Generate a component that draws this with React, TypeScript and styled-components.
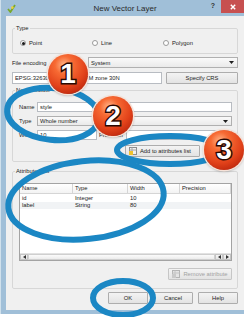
import React from 'react';
import styled, { createGlobalStyle } from 'styled-components';

const FRAME = '#a0bfd8';

const GlobalStyle = createGlobalStyle`
    *, *::before, *::after {
        box-sizing: border-box;
    }

    html, body {
        margin: 0;
        padding: 0;
        background: #fff;
    }
`;

const columns = ['Name', 'Type', 'Width', 'Precision'];

const attributes = [
    ['id', 'Integer', '10', ''],
    ['label', 'String', '80', ''],
];

const badges = [
    { n: '1', x: 68, y: 74 },
    { n: '2', x: 113, y: 116 },
    { n: '3', x: 224, y: 150 },
];

function ComboArrow() {
    return (
        <svg width="5" height="3" viewBox="0 0 5 3">
            <path d="M0 0 H5 L2.5 3 Z" fill="#1e1e1e" />
        </svg>
    );
}

function AttrIcon({ muted }: { muted?: boolean }) {
    return (
        <svg width="8" height="8" viewBox="0 0 8 8">
            <rect x="0.5" y="0.5" width="7" height="7" fill={muted ? '#e4e4e4' : '#f1f1f1'} stroke={muted ? '#b4b4b4' : '#8d8d8d'} />
            <path d="M0.5 3 H7.5 M3 0.5 V7.5" stroke={muted ? '#c4c4c4' : '#a5a5a5'} />
            <rect x="0" y="4" width="4" height="4" fill={muted ? '#c9c9c9' : '#f0c22c'} />
        </svg>
    );
}

export default function App() {
    return (
        <Stage>
            <GlobalStyle />
            <Window>
                <TitleBar>
                    <AppIcon width="9" height="9" viewBox="0 0 9 9">
                        <path d="M1 5 L3.4 8 L8 1" stroke="#78a82c" strokeWidth="1.8" fill="none" />
                        <circle cx="5.4" cy="3.6" r="1.3" fill="#efd03a" />
                    </AppIcon>
                    <Title>New Vector Layer</Title>
                    <TitleControls>
                        <Help>?</Help>
                        <CloseBtn>
                            <svg width="6" height="6" viewBox="0 0 6 6">
                                <path d="M0.8 0.8 L5.2 5.2 M5.2 0.8 L0.8 5.2" stroke="#fff" strokeWidth="1.4" />
                            </svg>
                        </CloseBtn>
                    </TitleControls>
                </TitleBar>

                <Body>
                    <Group>
                        <Legend>Type</Legend>
                        <RadioRow>
                            <RadioItem>
                                <Radio $checked />
                                Point
                            </RadioItem>
                            <RadioItem>
                                <Radio />
                                Line
                            </RadioItem>
                            <RadioItem>
                                <Radio />
                                Polygon
                            </RadioItem>
                        </RadioRow>
                    </Group>

                    <FormRow $top={3} $h={11}>
                        <Label $w={76}>File encoding</Label>
                        <Combo>
                            System
                            <ComboArrow />
                        </Combo>
                    </FormRow>

                    <FormRow $top={4} $h={12} $gap={4}>
                        <Field>EPSG:32630 - WGS 84 / UTM zone 30N</Field>
                        <Button $w={72}>Specify CRS</Button>
                    </FormRow>

                    <Group $top={2}>
                        <Legend>New attribute</Legend>
                        <FormRow $top={8}>
                            <Label $w={18}>Name</Label>
                            <Field>style</Field>
                        </FormRow>
                        <FormRow $top={4}>
                            <Label $w={18}>Type</Label>
                            <Combo>
                                Whole number
                                <ComboArrow />
                            </Combo>
                        </FormRow>
                        <FormRow $top={4}>
                            <Label $w={18}>Width</Label>
                            <Field $w={60}>10</Field>
                            <Label $w={27} $left={2}>Precision</Label>
                            <Field />
                        </FormRow>
                        <AddRow>
                            <Button $pad="0 8px 0 3px">
                                <AttrIcon />
                                Add to attributes list
                            </Button>
                        </AddRow>
                    </Group>

                    <Group $top={5}>
                        <Legend>Attributes list</Legend>
                        <Table>
                            <HeaderRow>
                                {columns.map((c) => (
                                    <HeaderCell key={c}>{c}</HeaderCell>
                                ))}
                            </HeaderRow>
                            <TableBody>
                                {attributes.map((row, i) => (
                                    <DataRow key={row[0]} $alt={i % 2 === 1}>
                                        {row.map((cell, j) => (
                                            <DataCell key={j}>{cell}</DataCell>
                                        ))}
                                    </DataRow>
                                ))}
                            </TableBody>
                            <ScrollBar>
                                <ScrollBtn>
                                    <svg width="3" height="4" viewBox="0 0 3 4">
                                        <path d="M3 0 V4 L0 2 Z" fill="#333" />
                                    </svg>
                                </ScrollBtn>
                                <Thumb>
                                    <Grip />
                                </Thumb>
                                <ScrollBtn>
                                    <svg width="3" height="4" viewBox="0 0 3 4">
                                        <path d="M3 0 V4 L0 2 Z" fill="#333" />
                                    </svg>
                                </ScrollBtn>
                                <ScrollBtn>
                                    <svg width="3" height="4" viewBox="0 0 3 4">
                                        <path d="M0 0 V4 L3 2 Z" fill="#333" />
                                    </svg>
                                </ScrollBtn>
                            </ScrollBar>
                        </Table>
                        <RemoveRow>
                            <Button $w={64} $disabled>
                                <AttrIcon muted />
                                Remove attribute
                            </Button>
                        </RemoveRow>
                    </Group>

                    <DialogButtons>
                        <Button $w={40}>OK</Button>
                        <Button $w={40}>Cancel</Button>
                        <Button $w={40}>Help</Button>
                    </DialogButtons>
                </Body>
            </Window>

            <Annotations viewBox="0 0 244 317">
                <ellipse cx="53" cy="114" rx="46" ry="26" transform="rotate(6 53 114)" />
                <ellipse cx="170" cy="150" rx="53" ry="14" />
                <ellipse cx="86" cy="200" rx="78" ry="39" transform="rotate(-6 86 200)" />
                <ellipse cx="123" cy="298" rx="30" ry="17" />
            </Annotations>

            {badges.map((b) => (
                <Badge key={b.n} $x={b.x} $y={b.y}>
                    {b.n}
                </Badge>
            ))}
        </Stage>
    );
}

const Stage = styled.div`
    position: relative;
    width: 244px;
    height: 317px;
    overflow: hidden;
    background: #fff;
    font-family: 'Liberation Sans', Arial, sans-serif;
    font-size: 5.8px;
    color: #222;
`;

const Window = styled.div`
    width: 250px;
    padding: 0 6px 4px;
    background: ${FRAME};
    box-shadow: inset 1px 0 0 #cfe0ec;
`;

const TitleBar = styled.div`
    height: 16px;
    display: grid;
    grid-template-columns: 1fr auto 1fr;
`;

const AppIcon = styled.svg`
    margin: 4px 0 0 1px;
`;

const Title = styled.div`
    font-size: 8px;
    line-height: 18px;
    color: #2a2a2a;
`;

const TitleControls = styled.div`
    display: flex;
    justify-content: flex-end;
    align-items: flex-start;
`;

const Help = styled.span`
    font-size: 7px;
    font-weight: bold;
    line-height: 12px;
    margin-right: 6px;
    color: #333;
`;

const CloseBtn = styled.div`
    width: 23px;
    height: 13px;
    background: #c75050;
    display: flex;
    align-items: center;
    justify-content: center;
`;

const Body = styled.div`
    height: 294px;
    padding: 8px 6px 6px;
    background: #f0f0f0;
    display: flex;
    flex-direction: column;
`;

const Group = styled.fieldset<{ $top?: number }>`
    margin: ${(p) => p.$top ?? 0}px 0 0;
    padding: 0 5px 0 6px;
    min-width: 0;
    border: 1px solid #d7d7d7;
    border-radius: 2px;
    display: flex;
    flex-direction: column;
`;

const Legend = styled.legend`
    margin-left: -4px;
    padding: 0 1px;
    line-height: 8px;
    font-size: 5.8px;
`;

const RadioRow = styled.div`
    display: grid;
    grid-template-columns: 72px 71px 1fr;
    height: 8px;
    margin: 7px 0 6px 1px;
    align-items: center;
`;

const RadioItem = styled.div`
    display: flex;
    align-items: center;
    gap: 3px;
`;

const Radio = styled.span<{ $checked?: boolean }>`
    width: 6px;
    height: 6px;
    border-radius: 50%;
    border: 1px solid #9a9a9a;
    background: #fff;
    display: flex;
    align-items: center;
    justify-content: center;

    &::after {
        content: '';
        width: 3px;
        height: 3px;
        border-radius: 50%;
        background: ${(p) => (p.$checked ? '#1a1a1a' : 'transparent')};
    }
`;

const FormRow = styled.div<{ $top?: number; $h?: number; $gap?: number }>`
    display: flex;
    align-items: center;
    gap: ${(p) => p.$gap ?? 0}px;
    height: ${(p) => p.$h ?? 10}px;
    margin-top: ${(p) => p.$top ?? 0}px;
    flex: none;
`;

const Label = styled.span<{ $w: number; $left?: number }>`
    flex: 0 0 ${(p) => p.$w}px;
    margin-left: ${(p) => p.$left ?? 0}px;
    white-space: nowrap;
`;

const Field = styled.div<{ $w?: number }>`
    flex: ${(p) => (p.$w ? `0 0 ${p.$w}px` : '1 1 0')};
    height: 100%;
    min-width: 0;
    padding: 0 2px;
    display: flex;
    align-items: center;
    white-space: nowrap;
    overflow: hidden;
    background: #fff;
    border: 1px solid #b8bcc2;
`;

const Combo = styled(Field)`
    justify-content: space-between;
    padding-right: 3px;
    background: linear-gradient(#fafafa, #eaeaea);
    border-color: #b0b0b0;
`;

const Button = styled.button<{ $w?: number; $disabled?: boolean; $pad?: string }>`
    font: inherit;
    height: 12px;
    width: ${(p) => (p.$w ? `${p.$w}px` : 'auto')};
    padding: ${(p) => p.$pad ?? '0'};
    flex: none;
    display: flex;
    align-items: center;
    justify-content: center;
    gap: 3px;
    white-space: nowrap;
    color: ${(p) => (p.$disabled ? '#a2a2a2' : '#222')};
    background: linear-gradient(#f3f3f3, #e3e3e3);
    border: 1px solid ${(p) => (p.$disabled ? '#c6c6c6' : '#adadad')};
    border-radius: 1px;
`;

const AddRow = styled.div`
    display: flex;
    margin: 5px 0 4px;
    padding-left: 106px;
`;

const Table = styled.div`
    margin-top: 8px;
    height: 78px;
    background: #fff;
    border: 1px solid #a3a3a3;
    display: flex;
    flex-direction: column;
`;

const grid = `
    display: grid;
    grid-template-columns: 53px 55px 52px 1fr;
`;

const HeaderRow = styled.div`
    ${grid}
    height: 10px;
    background: linear-gradient(#fff, #f3f3f3);
    border-bottom: 1px solid #d5d5d5;
`;

const HeaderCell = styled.div`
    padding-left: 2px;
    line-height: 9px;
    border-right: 1px solid #d5d5d5;
`;

const TableBody = styled.div`
    flex: 1;
    padding-top: 1px;
`;

const DataRow = styled.div<{ $alt?: boolean }>`
    ${grid}
    height: 7px;
    line-height: 7px;
    background: ${(p) => (p.$alt ? '#f1f3f5' : '#fff')};
`;

const DataCell = styled.div`
    padding-left: 2px;
    white-space: nowrap;
`;

const ScrollBar = styled.div`
    height: 7px;
    display: flex;
    background: #ececec;
    border-top: 1px solid #e2e2e2;
`;

const ScrollBtn = styled.div`
    width: 8px;
    display: flex;
    align-items: center;
    justify-content: center;
    background: linear-gradient(#f6f6f6, #e4e4e4);
    border: 1px solid #c4c4c4;
`;

const Thumb = styled.div`
    flex: 1;
    display: flex;
    align-items: center;
    justify-content: center;
    background: linear-gradient(#fbfbfb, #ececec);
    border: 1px solid #cfcfcf;
`;

const Grip = styled.div`
    width: 11px;
    height: 3px;
    background-image: radial-gradient(#9a9a9a 40%, transparent 45%);
    background-size: 2px 1.5px;
`;

const RemoveRow = styled.div`
    display: flex;
    justify-content: flex-end;
    margin: 7px 0 8px;
`;

const DialogButtons = styled.div`
    display: flex;
    justify-content: flex-end;
    gap: 5px;
    margin-top: 3px;
`;

const Annotations = styled.svg`
    position: absolute;
    inset: 0;
    width: 244px;
    height: 317px;
    pointer-events: none;

    ellipse {
        fill: none;
        stroke: #1b87c4;
        stroke-width: 6;
    }
`;

const Badge = styled.div<{ $x: number; $y: number }>`
    position: absolute;
    left: ${(p) => p.$x - 20}px;
    top: ${(p) => p.$y - 20}px;
    width: 40px;
    height: 40px;
    border-radius: 50%;
    display: flex;
    align-items: center;
    justify-content: center;
    background: radial-gradient(
        circle at 40% 28%,
        #ffb88e 0%,
        #f76a33 24%,
        #e2421a 58%,
        #b8230b 86%,
        #8c1606 100%
    );
    box-shadow: 0 0 0 1.5px #f6e2d8, 0 1px 3px rgba(0, 0, 0, 0.45);
    font: bold 28px 'Liberation Sans', Arial, sans-serif;
    color: #fff;
    -webkit-text-stroke: 3px #2a0903;
    paint-order: stroke fill;
`;
